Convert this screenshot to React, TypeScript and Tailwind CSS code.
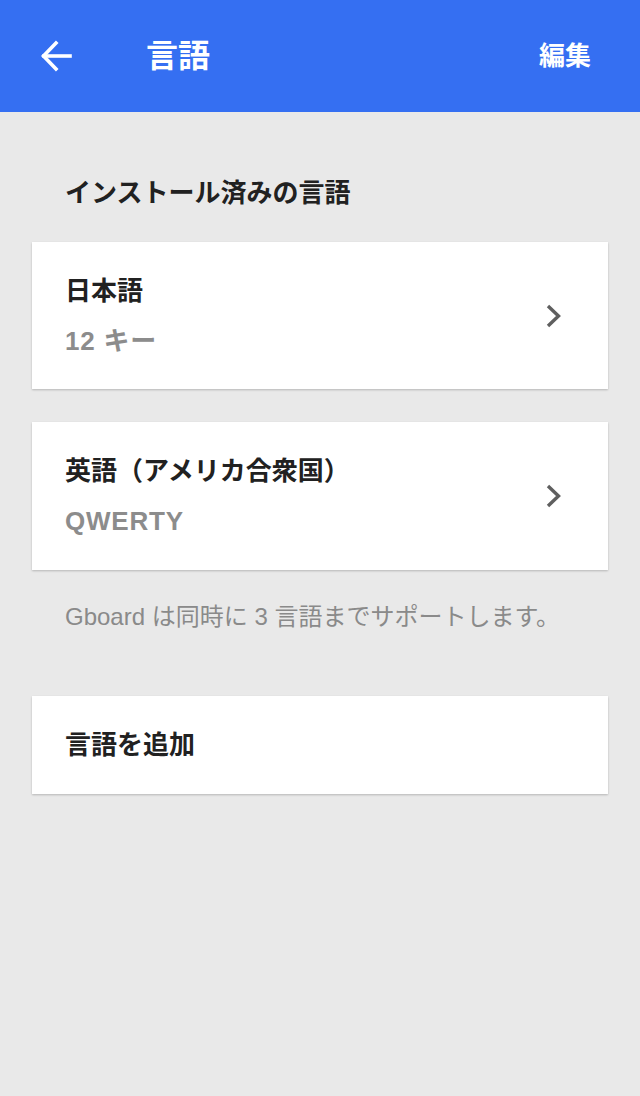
import { ReactNode } from 'react'

const FONT = '"Liberation Sans", "Noto Sans CJK JP", sans-serif'

function BackArrow() {
  return (
    <svg width="32" height="32" viewBox="0 0 32 32" fill="none" stroke="white" strokeWidth="3.6" strokeLinecap="square">
      <path d="M30 16H4" />
      <path d="M16 3L3.5 16L16 29" strokeLinejoin="miter" />
    </svg>
  )
}

function Chevron() {
  return (
    <svg width="16" height="24" viewBox="0 0 16 24" fill="none" stroke="#5f5f5f" strokeWidth="3.4">
      <path d="M2 2L12.5 12L2 22" />
    </svg>
  )
}

function Card({ children, className }: { children: ReactNode; className: string }) {
  return (
    <div className={`mx-8 bg-white shadow-[0_1px_2px_rgba(0,0,0,0.22)] flex items-center pl-[33px] pr-[46px] ${className}`}>
      {children}
    </div>
  )
}

function LanguageCard({ name, layout, className }: { name: string; layout: string; className: string }) {
  return (
    <Card className={className}>
      <div className="flex-1 flex flex-col gap-[24px]">
        <span className="text-[26px] leading-[26px] font-bold text-[#212121]">{name}</span>
        <span className="text-[26px] leading-[26px] font-bold tracking-[0.8px] text-[#8c8c8c]">{layout}</span>
      </div>
      <Chevron />
    </Card>
  )
}

export default function App() {
  return (
    <div className="min-h-[1096px] w-[640px] bg-[#e9e9e9]" style={{ fontFamily: FONT }}>
      <header className="h-[112px] bg-[#356ff2] flex items-center pl-[40px] pr-[49px]">
        <BackArrow />
        <h1 className="ml-[74px] text-[32px] leading-none font-bold text-white">言語</h1>
        <button className="ml-auto text-[26px] leading-none font-bold text-white">編集</button>
      </header>

      <h2 className="pt-[68px] pl-[65px] text-[26px] leading-[26px] font-bold text-[#212121]">
        インストール済みの言語
      </h2>

      <LanguageCard name="日本語" layout="12 キー" className="mt-[36px] h-[147px]" />
      <LanguageCard name="英語（アメリカ合衆国）" layout="QWERTY" className="mt-[33px] h-[148px]" />

      <p className="mt-[35px] pl-[65px] text-[24px] leading-[24px] text-[#8a8a8a]">
        Gboard は同時に 3 言語までサポートします。
      </p>

      <Card className="mt-[67px] h-[98px]">
        <span className="text-[26px] leading-[26px] font-bold text-[#212121]">言語を追加</span>
      </Card>
    </div>
  )
}
